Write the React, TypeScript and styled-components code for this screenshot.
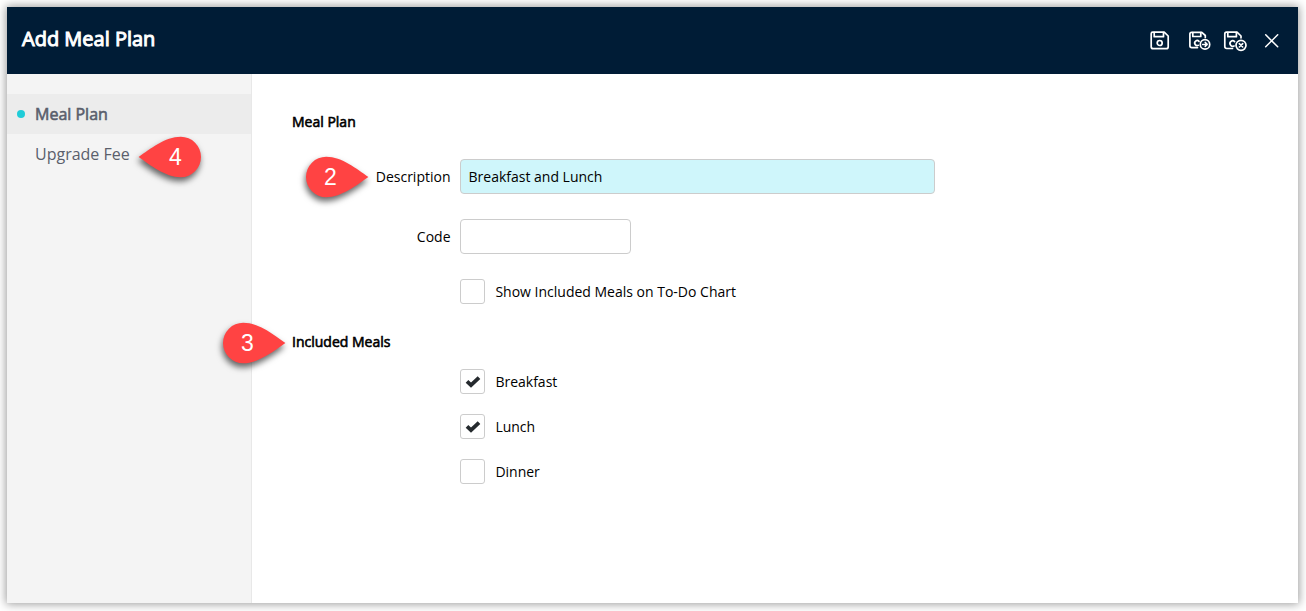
import React from "react";
import styled, { createGlobalStyle } from "styled-components";

const GlobalStyle = createGlobalStyle`
  *, *::before, *::after { box-sizing: border-box; }
  body {
    margin: 0;
    background: #fff;
    font-family: "Open Sans", "Noto Sans", sans-serif;
    font-size: 14px;
    color: #000;
  }
`;

const Page = styled.div`
  height: 611px;
  padding: 7px 8px 8px 7px;
  overflow: hidden;
`;

const Dialog = styled.div`
  position: relative;
  display: flex;
  flex-direction: column;
  height: 596px;
  background: #fff;
  box-shadow: 0 0 9px 1px rgba(0, 0, 0, 0.4);
`;

const Header = styled.header`
  display: flex;
  align-items: center;
  justify-content: space-between;
  flex: none;
  height: 67px;
  padding: 0 18px 0 15px;
  background: #001c36;
  color: #fff;
`;

const Title = styled.h1`
  margin: 0;
  padding-bottom: 3px;
  font-size: 20px;
  line-height: 28px;
  font-weight: 400;
  -webkit-text-stroke: 1px currentColor;
`;

const Actions = styled.div`
  display: flex;
  align-items: center;
`;

const IconButton = styled.button<{ $width: number }>`
  display: flex;
  width: ${(p) => p.$width}px;
  height: 24px;
  padding: 0;
  border: 0;
  background: none;
  color: #fff;

  svg {
    display: block;
    flex: none;
  }
`;

const Body = styled.div`
  display: flex;
  flex: 1;
`;

const Sidebar = styled.nav`
  width: 245px;
  padding-top: 20px;
  background: #f4f4f4;
  border-right: 1px solid #e8e8e8;
`;

const NavItem = styled.div<{ $active?: boolean }>`
  display: flex;
  align-items: center;
  height: 40px;
  padding-left: 10px;
  font-size: 16px;
  color: #5a5f6c;
  background: ${(p) => (p.$active ? "#ececec" : "transparent")};
  -webkit-text-stroke: ${(p) => (p.$active ? "0.6px currentColor" : "0")};

  &::before {
    content: "";
    width: 8px;
    height: 8px;
    margin-right: 10px;
    border-radius: 50%;
    background: ${(p) => (p.$active ? "#1fccd8" : "transparent")};
  }
`;

const Form = styled.main`
  flex: 1;
  padding: 38px 0 0 40px;
`;

const SectionTitle = styled.h2`
  margin: 0;
  font-size: 14px;
  line-height: 20px;
  font-weight: 400;
  -webkit-text-stroke: 0.6px currentColor;
`;

const Fields = styled.div<{ $top: number; $gap: number; $bottom?: number }>`
  display: grid;
  row-gap: ${(p) => p.$gap}px;
  padding-top: ${(p) => p.$top}px;
  padding-bottom: ${(p) => p.$bottom ?? 0}px;
`;

const FieldRow = styled.label`
  display: grid;
  grid-template-columns: 158.5px auto;
  column-gap: 9.5px;
  align-items: center;
  justify-content: start;
`;

const FieldLabel = styled.span`
  text-align: right;
`;

const TextInput = styled.input<{ $width: number; $filled?: boolean }>`
  width: ${(p) => p.$width}px;
  height: 35px;
  padding: 0 7.5px;
  border: 1px solid #ccc;
  border-radius: 4px;
  outline: none;
  background: ${(p) => (p.$filled ? "#cff6fb" : "#fff")};
  font: inherit;
  color: #000;
`;

const CheckRow = styled.label`
  display: flex;
  align-items: center;
  gap: 10.4px;
  height: 25px;
  margin-left: 168px;
`;

const Box = styled.span`
  display: flex;
  align-items: center;
  justify-content: center;
  width: 25px;
  height: 25px;
  border: 1px solid #ccc;
  border-radius: 3px;
  background: #fff;
`;

const Marker = styled.div<{ $x: number; $y: number }>`
  position: absolute;
  left: ${(p) => p.$x}px;
  top: ${(p) => p.$y}px;
  width: 63px;
  height: 41px;

  svg {
    display: block;
    overflow: visible;
    filter: drop-shadow(-1px 4px 3px rgba(0, 0, 0, 0.6));
  }
`;

const MarkerNumber = styled.span<{ $left?: boolean }>`
  position: absolute;
  top: 0;
  ${(p) => (p.$left ? "right: 5px;" : "left: 4px;")}
  width: 41px;
  line-height: 41px;
  text-align: center;
  font-family: "Liberation Sans", Arial, sans-serif;
  font-size: 23px;
  color: #fff;
`;

function Callout({ n, x, y, left }: { n: number; x: number; y: number; left?: boolean }) {
  return (
    <Marker $x={x} $y={y}>
      <svg width="63" height="41" viewBox="0 0 63 41">
        <path
          transform={left ? "translate(63 0) scale(-1 1)" : undefined}
          fill="#ff4343"
          d="M62.4 20C51 12.2 36 -.2 20.2 -.2A20.2 20.2 0 0 0 20.2 40.2C36 40.2 51 27.8 62.4 20Z"
        />
      </svg>
      <MarkerNumber $left={left}>{n}</MarkerNumber>
    </Marker>
  );
}

const stroke = {
  fill: "none",
  stroke: "currentColor",
  strokeWidth: 1.7,
  strokeLinecap: "round" as const,
  strokeLinejoin: "round" as const,
};

const SaveIcon = () => (
  <svg width="24" height="24" {...stroke}>
    <path d="M3.7 3.2H15.2L19.2 7V17.7Q19.2 19.7 17.2 19.7H4.2Q2.2 19.7 2.2 17.7V4.7Q2.2 3.2 3.7 3.2Z" />
    <path d="M5.2 3.5V7.7H14.5V3.5" />
    <circle cx="10.7" cy="14" r="2.5" />
  </svg>
);

const SaveNextIcon = () => (
  <svg width="26" height="24" {...stroke}>
    <path d="M10.5 18.6H4.8Q2.9 18.6 2.9 16.7V5Q2.9 3.3 4.6 3.3H14.8L18.3 6.5V8.5" />
    <path d="M5.8 3.5V7.5H13.8V3.5M12 12.3A2.5 2.5 0 1 0 11.4 16.3" />
    <circle cx="18" cy="15.4" r="4.7" />
    <path d="M15.6 15.4H20.1M18.2 13.4L20.2 15.4L18.2 17.4" strokeWidth="1.5" />
  </svg>
);

const SaveCloseIcon = () => (
  <svg width="26" height="24" {...stroke}>
    <path d="M10.5 19.5H4.8Q2.8 19.5 2.8 17.5V4.9Q2.8 3.2 4.5 3.2H15L19 7V8.8" />
    <path d="M5.8 3.5V7.7H14.4V3.5M12.6 12.6A2.7 2.7 0 1 0 12 16.9" />
    <circle cx="19" cy="16.3" r="5" />
    <path d="M17.3 14.6L20.7 18M20.7 14.6L17.3 18" strokeWidth="1.6" />
  </svg>
);

const CloseIcon = () => (
  <svg width="16" height="24" {...stroke} strokeWidth={1.5}>
    <path d="M1.7 5.8L13.7 17.8M13.7 5.8L1.7 17.8" />
  </svg>
);

const CheckMark = () => (
  <svg width="16" height="14" viewBox="0 0 16 14">
    <path d="M2 6.4L6 10.2L14 2.6" fill="none" stroke="#252a2e" strokeWidth="3.8" />
  </svg>
);

function Check({ label, checked }: { label: string; checked?: boolean }) {
  return (
    <CheckRow>
      <Box role="checkbox" aria-checked={!!checked}>{checked && <CheckMark />}</Box>
      <span>{label}</span>
    </CheckRow>
  );
}

export default function App() {
  return (
    <Page>
      <GlobalStyle />
      <Dialog>
        <Header>
          <Title>Add Meal Plan</Title>
          <Actions>
            <IconButton $width={38} aria-label="Save"><SaveIcon /></IconButton>
            <IconButton $width={35} aria-label="Save and next"><SaveNextIcon /></IconButton>
            <IconButton $width={42} aria-label="Save and close"><SaveCloseIcon /></IconButton>
            <IconButton $width={16} aria-label="Close"><CloseIcon /></IconButton>
          </Actions>
        </Header>
        <Body>
          <Sidebar>
            <NavItem $active>Meal Plan</NavItem>
            <NavItem>Upgrade Fee</NavItem>
          </Sidebar>
          <Form>
            <SectionTitle>Meal Plan</SectionTitle>
            <Fields $top={27} $gap={25} $bottom={28}>
              <FieldRow>
                <FieldLabel>Description</FieldLabel>
                <TextInput $width={475} $filled defaultValue="Breakfast and Lunch" />
              </FieldRow>
              <FieldRow>
                <FieldLabel>Code</FieldLabel>
                <TextInput $width={171} />
              </FieldRow>
              <Check label="Show Included Meals on To-Do Chart" />
            </Fields>
            <SectionTitle>Included Meals</SectionTitle>
            <Fields $top={17} $gap={20}>
              <Check label="Breakfast" checked />
              <Check label="Lunch" checked />
              <Check label="Dinner" />
            </Fields>
          </Form>
        </Body>
        <Callout n={2} x={299} y={150} />
        <Callout n={3} x={216} y={316} />
        <Callout n={4} x={131} y={130} left />
      </Dialog>
    </Page>
  );
}
